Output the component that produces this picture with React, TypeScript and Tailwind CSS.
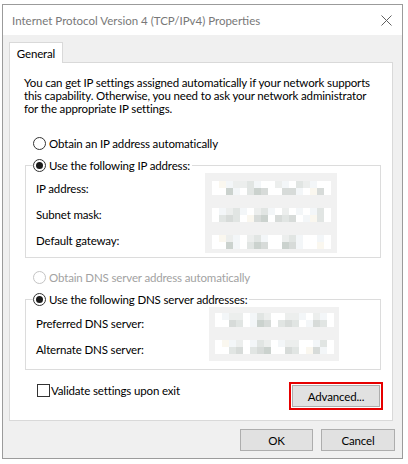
import React from 'react';

const tone: Record<string, string> = {
  w: 'bg-white',
  c: 'bg-[#faf7ef]',
  b: 'bg-[#f3f6f8]',
  l: 'bg-[#eceeed]',
  m: 'bg-[#e1e5e3]',
  g: 'bg-[#cbd2ce]',
  d: 'bg-[#d7dbd9]',
};

const Strip = ({ rows }: { rows: string[] }) => (
  <div className="flex flex-col">
    {rows.map((r, i) => (
      <div key={i} className="flex">
        {r.split('').map((ch, j) => (
          <div key={j} className={`w-[7px] h-[7px] ${tone[ch]}`} />
        ))}
      </div>
    ))}
  </div>
);

const Radio = ({ checked = false, disabled = false }: { checked?: boolean; disabled?: boolean }) => (
  <span
    className={`w-[13px] h-[13px] rounded-full border bg-white flex items-center justify-center shrink-0 ${
      disabled ? 'border-[#c4c4c4]' : 'border-[#333333]'
    }`}
  >
    {checked && <span className="w-[7px] h-[7px] rounded-full bg-[#1b1b1b]" />}
  </span>
);

const Field = ({ label }: { label: string }) => (
  <div className="h-[16px] flex items-center pl-[3px] whitespace-nowrap">{label}</div>
);

const WinButton = ({ label, className = '' }: { label: string; className?: string }) => (
  <button className={`h-[22px] bg-[#e1e1e1] border border-[#adadad] flex items-center justify-center ${className}`}>
    {label}
  </button>
);

export default function App() {
  return (
    <div className="w-[408px] h-[464px] bg-white pt-[4px] pl-[2px] font-['Segoe_UI','Lato',sans-serif] text-[11.5px] tracking-[-0.15px] leading-[13px] text-black">
      <div className="w-[401px] h-[455px] border border-[#9b9b9b] flex flex-col">
        {/* Title bar */}
        <div className="h-[30px] shrink-0 bg-white flex items-center justify-between pl-[9px] pr-[10px]">
          <span className="text-[#787878] tracking-normal whitespace-nowrap">Internet Protocol Version 4 (TCP/IPv4) Properties</span>
          <svg width="11" height="11" viewBox="0 0 11 11">
            <path d="M0.5 0.5 L10.5 10.5 M10.5 0.5 L0.5 10.5" stroke="#606060" strokeWidth="1" fill="none" />
          </svg>
        </div>

        {/* Body */}
        <div className="flex-1 bg-[#f0f0f0] pt-[7px] pl-[6px] pr-[9px] flex flex-col">
          <div className="flex">
            <div className="relative z-10 h-[21px] -mb-[1px] w-[54px] border border-b-0 border-[#d9d9d9] bg-white flex items-center justify-center">
              General
            </div>
          </div>

          <div className="h-[359px] border border-[#d9d9d9] bg-white flex flex-col">
            <p className="pt-[13px] pl-[14px] whitespace-nowrap">
              You can get IP settings assigned automatically if your network supports
              <br />
              this capability. Otherwise, you need to ask your network administrator
              <br />
              for the appropriate IP settings.
            </p>

            <div className="mt-[20px] pl-[23px] h-[16px] flex items-center gap-[3px]">
              <Radio />
              <span>Obtain an IP address automatically</span>
            </div>

            <fieldset className="mt-[6px] ml-[15px] w-[356px] border border-[#dcdcdc] pl-[7px] pb-[4px]">
              <legend className="bg-white pr-[2px]">
                <span className="h-[16px] flex items-center gap-[3px]">
                  <Radio checked />
                  <span>Use the following IP address:</span>
                </span>
              </legend>
              <div className="flex">
                <div className="w-[172px] pt-[7px] flex flex-col gap-[10px]">
                  <Field label="IP address:" />
                  <Field label="Subnet mask:" />
                  <Field label="Default gateway:" />
                </div>
                <div className="w-[132px] h-[80px] bg-[#f1f1f1] pl-[7px] pt-[8px] flex flex-col gap-[13px]">
                  <Strip rows={['wcbllmbwwlbwmlbww', 'wwgbwmgdwwddbwcdw']} />
                  <Strip rows={['wblmbwlmbwlwbwbmw', 'wmdmwcdgwdmdwbcmw']} />
                  <Strip rows={['wclbwlmbwwlmbwwbw', 'wwgbwmgdwwgdbwwcw']} />
                </div>
              </div>
            </fieldset>

            <div className="mt-[11px] pl-[23px] h-[16px] flex items-center gap-[3px] text-[#a2a2a2]">
              <Radio disabled />
              <span>Obtain DNS server address automatically</span>
            </div>

            <fieldset className="mt-[6px] ml-[15px] w-[356px] border border-[#dcdcdc] pl-[7px] pb-[8px]">
              <legend className="bg-white pr-[2px]">
                <span className="h-[16px] flex items-center gap-[3px]">
                  <Radio checked />
                  <span>Use the following DNS server addresses:</span>
                </span>
              </legend>
              <div className="flex">
                <div className="w-[176px] pt-[8px] flex flex-col gap-[10px]">
                  <Field label="Preferred DNS server:" />
                  <Field label="Alternate DNS server:" />
                </div>
                <div className="w-[130px] h-[54px] bg-[#f1f1f1] pl-[6px] pt-[6px] flex flex-col gap-[13px]">
                  <Strip rows={['wbllwbmlwwllbwlbw', 'wwdmwbgdwmdmwbdmw']} />
                  <Strip rows={['wcblwbmlwbllwwbmw', 'wwmdwmdgwwdmwcdbw']} />
                </div>
              </div>
            </fieldset>

            <div className="mt-[12px] pl-[27px] pr-[9px] flex items-start justify-between">
              <div className="h-[16px] flex items-center gap-[1px]">
                <span className="w-[13px] h-[13px] border border-[#333333] bg-white shrink-0" />
                <span>Validate settings upon exit</span>
              </div>
              <div className="border-2 border-[#e60000] p-[1px]">
                <WinButton label="Advanced..." className="w-[88px] h-[21px]" />
              </div>
            </div>
          </div>

          <div className="mt-[8px] -mr-[2px] flex justify-end gap-[8px]">
            <WinButton label="OK" className="w-[73px]" />
            <WinButton label="Cancel" className="w-[74px]" />
          </div>
        </div>
      </div>
    </div>
  );
}
